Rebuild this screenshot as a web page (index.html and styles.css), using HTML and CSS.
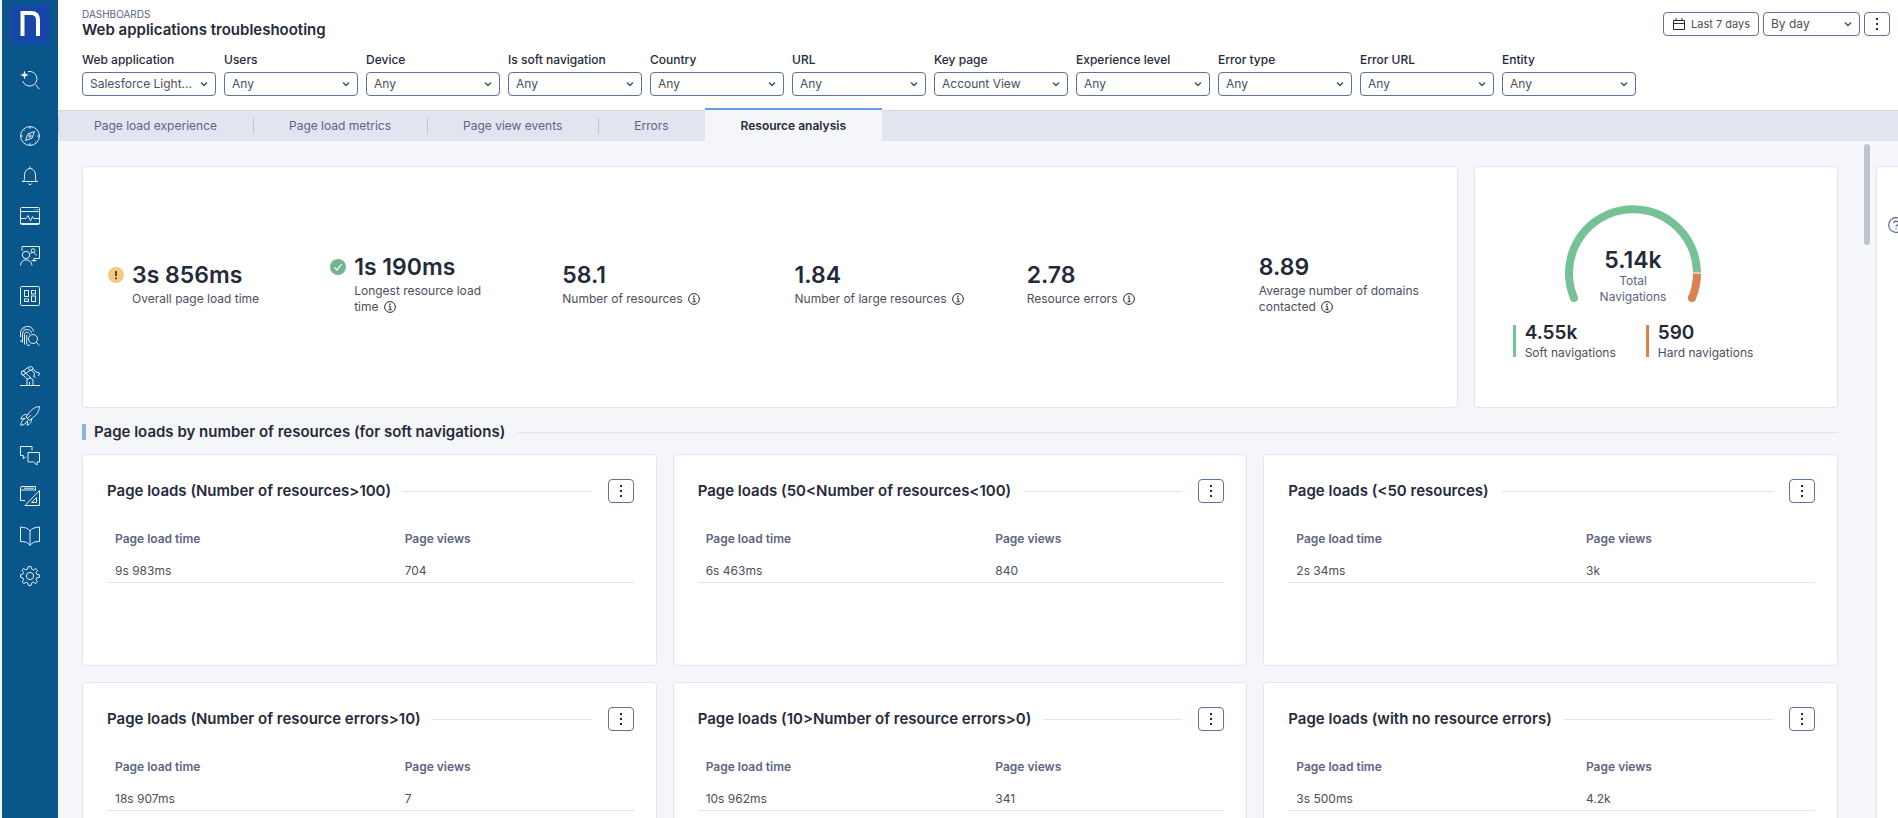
FILE: index.html
```html
<!DOCTYPE html>
<html lang="en">
<head>
<meta charset="utf-8">
<meta name="viewport" content="width=device-width, initial-scale=1">
<title>Web applications troubleshooting</title>
<link rel="stylesheet" href="styles.css">
</head>
<body>
<svg class="sprite" aria-hidden="true">
  <symbol id="chevron" viewBox="0 0 8 8"><path d="M1 2.5 4 5.5 7 2.5" fill="none" stroke="currentColor" stroke-width="1.4"/></symbol>
  <symbol id="kebab" viewBox="0 0 12 12"><path d="M5 0h2v2H5zM5 5h2v2H5zM5 10h2v2H5z" fill="currentColor"/></symbol>
  <symbol id="info" viewBox="0 0 12 12"><circle cx="6" cy="6" r="5.4" fill="none" stroke="currentColor"/><path d="M4.8 5h1.4v3.6M4.5 8.7h3.2" fill="none" stroke="currentColor"/><circle cx="6" cy="3.2" r=".8" fill="currentColor"/></symbol>
</svg>
<div class="app">
  <nav class="sidebar" aria-label="Main">
    <a class="logo" href="#" aria-label="Home"><svg viewBox="0 0 40 40"><path d="M12.5 32V9H21q7 0 7 7v16" fill="none" stroke="#fff" stroke-width="4"/></svg></a>
    <a class="nav-link nav-search" href="#" aria-label="Search"><svg viewBox="0 0 20 20"><path d="M8 1.6a7.3 7.3 0 1 1-5.2 9.6M15.4 14.6l4.1 4.6"/><path class="solid" d="M4.5.5 5.6 3.9 9 5 5.6 6.1 4.5 9.5 3.4 6.1 0 5l3.4-1.1z"/></svg></a>
    <a class="nav-link" href="#" aria-label="Discover"><svg viewBox="0 0 20 20"><circle cx="10" cy="10" r="9.4"/><path d="m14.5 5.5-2.4 6.6-6.6 2.4 2.4-6.6zM10 .5v2.2M10 17.3v2.2M.5 10h2.2M17.3 10h2.2M3.3 3.3l1.2 1.2M15.5 15.5l1.2 1.2"/><circle cx="10" cy="10" r="1.2"/></svg></a>
    <a class="nav-link" href="#" aria-label="Alerts"><svg viewBox="0 0 20 20"><path d="M2 15.5h16M3.5 15.5c1.2-1.5 1-4 1-6.500a5.500 6.500 0 0 1 11 0c0 2.500-.2 5 1 6.500M10 .5v2M8.300 17.500a1.800 1.800 0 0 0 3.400 0"/></svg></a>
    <a class="nav-link" href="#" aria-label="Monitoring"><svg viewBox="0 0 20 20"><rect x=".5" y="1.500" width="19" height="17" rx="1"/><path d="M.5 5.500h19M14.500 3.500h1M17 3.500h1M1 12.500h5l2-3 2.500 5.500 2-4.500 1 2h6M1 17.500h18"/></svg></a>
    <a class="nav-link" href="#" aria-label="Users"><svg viewBox="0 0 20 20"><path d="M2 5V.5h17.500v12H14M14 12v4M11.500 14.500h5"/><circle cx="6" cy="9" r="3.700"/><path d="M.5 19.500c.2-7.500 11-7.500 11.500 0M10.500 8l2-2.200"/><circle cx="13" cy="4.700" r="2"/><path d="m14 6.500 2.500 3"/></svg></a>
    <a class="nav-link" href="#" aria-label="Dashboards"><svg viewBox="0 0 20 20"><rect x=".5" y=".5" width="19" height="19" rx="1"/><rect x="4.500" y="4.500" width="4" height="6"/><rect x="11.500" y="4.500" width="4" height="3.500"/><rect x="4.500" y="13" width="4" height="2.500"/><rect x="11.500" y="10" width="4" height="5.500"/></svg></a>
    <a class="nav-link" href="#" aria-label="Investigations"><svg viewBox="0 0 20 20"><circle cx="13" cy="13" r="4.500"/><path d="m16.300 16.300 3.200 3.200M.5 11V7c0-8 12-9 13-1.500M2.500 16.500V8c0-5.500 8-6 9-1M1 14v2M4.500 18.500V8.500c0-3 4.500-3 5 0M6.700 18.500V9M3 3.500l2-2M7 19.500l3-.5"/></svg></a>
    <a class="nav-link" href="#" aria-label="Remote actions"><svg viewBox="0 0 20 20"><path d="M0 19.500h20M7 19v-5.500q3-3 6 0V19M9.500 16v3M2 8.500l6 5M5 6.500l6 5.500M2.500 5.500l6-4.500M5.500 7.500l6-4M13 2.500l3 3.500M11.500 4l3.500 4M16 6l3.500 1-1 3M14.500 8l-1 2.500 2 1"/><circle cx="3.200" cy="7" r="2"/><circle cx="10.700" cy="2.500" r="2"/></svg></a>
    <a class="nav-link" href="#" aria-label="Campaigns"><svg viewBox="0 0 20 20"><path d="M19.500.5c-6 .5-9 4-13.500 10.500l3.300 3.300C16 10 19 6.500 19.500.5ZM7.500 8.500C4 8 2 10 .8 13l4.700-.7M11.500 12.500c.5 3.500-1.500 5.500-4.300 6.800l.5-4.700M5 12.500C2 14 1 16.500.7 19.300c3-.3 5-1.500 6.800-4.500M7 12.800l4-4"/></svg></a>
    <a class="nav-link" href="#" aria-label="Engage"><svg viewBox="0 0 20 20"><path d="M12 4.500v-4H.5v9h2.800v3.500l2.500-2.500M8 6.500h11.500v9.500H17v3l-3.500-3H8z"/></svg></a>
    <a class="nav-link" href="#" aria-label="Design"><svg viewBox="0 0 20 20"><path d="M5 14.500H.5V2Q.5.500 2 .5h13.500v4M.5 4h15M4 2.200h10M19.500 4.500v15H5zM16.500 11.500v5h-5z"/></svg></a>
    <a class="nav-link" href="#" aria-label="Library"><svg viewBox="0 0 20 20"><path d="M10 19.500V5Q8 1.500.5 1v14.500Q8 15.500 10 19.500 12 15.500 19.500 15.500V1Q12 1.500 10 5"/></svg></a>
    <a class="nav-link" href="#" aria-label="Settings"><svg viewBox="0 0 20 20"><circle cx="10" cy="10" r="3.600"/><path d="m8.200.6-.6 2.500-1.800.8L3.500 2.500 2 4.300l1.500 2.200-.7 1.700-2.300.6v2.500l2.400.6.7 1.800-1.400 2.200 1.800 1.700 2.200-1.400 1.600.7.600 2.500h2.700l.6-2.500 1.700-.7 2.300 1.400 1.700-1.800-1.400-2.200.7-1.700 2.600-.6V8.800l-2.600-.6-.7-1.700 1.500-2.200-1.800-1.800-2.200 1.400-1.800-.8-.6-2.500z"/></svg></a>
  </nav>

  <main class="main">
    <header class="header">
      <div class="title-row">
        <div>
          <p class="eyebrow">DASHBOARDS</p>
          <h1 class="page-title">Web applications troubleshooting</h1>
        </div>
        <div class="actions">
          <button class="date-button" type="button"><svg viewBox="0 0 14 14"><path d="M1.500 3.500h11v9h-11zM1.500 6.500h11M4 1v2.500M10 1v2.500" fill="none" stroke="currentColor"/></svg>Last 7 days</button>
          <span class="select granularity"><select aria-label="Granularity"><option>By day</option></select><svg><use href="#chevron"/></svg></span>
          <button class="kebab" type="button" aria-label="More options"><svg><use href="#kebab"/></svg></button>
        </div>
      </div>
      <form class="filters">
        <label class="filter">Web application<span class="select"><select><option>Salesforce Light...</option></select><svg><use href="#chevron"/></svg></span></label>
        <label class="filter">Users<span class="select"><select><option>Any</option></select><svg><use href="#chevron"/></svg></span></label>
        <label class="filter">Device<span class="select"><select><option>Any</option></select><svg><use href="#chevron"/></svg></span></label>
        <label class="filter">Is soft navigation<span class="select"><select><option>Any</option></select><svg><use href="#chevron"/></svg></span></label>
        <label class="filter">Country<span class="select"><select><option>Any</option></select><svg><use href="#chevron"/></svg></span></label>
        <label class="filter">URL<span class="select"><select><option>Any</option></select><svg><use href="#chevron"/></svg></span></label>
        <label class="filter">Key page<span class="select"><select><option>Account View</option></select><svg><use href="#chevron"/></svg></span></label>
        <label class="filter">Experience level<span class="select"><select><option>Any</option></select><svg><use href="#chevron"/></svg></span></label>
        <label class="filter">Error type<span class="select"><select><option>Any</option></select><svg><use href="#chevron"/></svg></span></label>
        <label class="filter">Error URL<span class="select"><select><option>Any</option></select><svg><use href="#chevron"/></svg></span></label>
        <label class="filter">Entity<span class="select"><select><option>Any</option></select><svg><use href="#chevron"/></svg></span></label>
      </form>
    </header>

    <nav class="tabs" aria-label="Dashboard sections">
      <a class="tab" href="#">Page load experience</a>
      <a class="tab" href="#">Page load metrics</a>
      <a class="tab" href="#">Page view events</a>
      <a class="tab" href="#">Errors</a>
      <a class="tab active" href="#" aria-current="page">Resource analysis</a>
    </nav>

    <div class="body">
      <div class="dashboard">
        <div class="overview">
          <section class="card kpis">
            <div class="kpi"><svg class="status warn" viewBox="0 0 16 16"><circle cx="8" cy="8" r="8"/><path d="M8 4v5M8 10.500v1.700" fill="none" stroke="#252a3a" stroke-width="1.600"/></svg><div><p class="kpi-value">3s 856ms</p><p class="kpi-label">Overall page load time</p></div></div>
            <div class="kpi"><svg class="status ok" viewBox="0 0 16 16"><circle cx="8" cy="8" r="8"/><path d="m4.500 8.500 2.500 2.500 4.500-6" fill="none" stroke="#fff" stroke-width="1.200"/></svg><div><p class="kpi-value">1s 190ms</p><p class="kpi-label">Longest resource load <span class="nowrap">time <svg class="info"><use href="#info"/></svg></span></p></div></div>
            <div class="kpi"><div><p class="kpi-value">58.1</p><p class="kpi-label">Number of <span class="nowrap">resources <svg class="info"><use href="#info"/></svg></span></p></div></div>
            <div class="kpi"><div><p class="kpi-value">1.84</p><p class="kpi-label">Number of large <span class="nowrap">resources <svg class="info"><use href="#info"/></svg></span></p></div></div>
            <div class="kpi"><div><p class="kpi-value">2.78</p><p class="kpi-label">Resource <span class="nowrap">errors <svg class="info"><use href="#info"/></svg></span></p></div></div>
            <div class="kpi last"><div><p class="kpi-value">8.89</p><p class="kpi-label">Average number of domains <span class="nowrap">contacted <svg class="info"><use href="#info"/></svg></span></p></div></div>
          </section>
          <section class="card navigations">
            <div class="gauge">
              <svg viewBox="0 0 136 100" aria-hidden="true"><g fill="none" stroke-width="8"><path d="M9 93A64 64 0 1 1 132 67.500" stroke="#76c196"/><path d="M132 68.500A64 64 0 0 1 127 93" stroke="#dd8052"/></g><circle cx="9" cy="93" r="4" fill="#76c196"/><circle cx="127" cy="93" r="4" fill="#dd8052"/></svg>
              <div class="gauge-text"><p class="gauge-value">5.14k</p><p>Total<br>Navigations</p></div>
            </div>
            <div class="legend">
              <div class="legend-item soft"><p class="legend-value">4.55k</p><p>Soft navigations</p></div>
              <div class="legend-item hard"><p class="legend-value">590</p><p>Hard navigations</p></div>
            </div>
          </section>
        </div>

        <h2 class="section-title">Page loads by number of resources (for soft navigations)</h2>

        <div class="cards">
          <section class="card panel">
            <div class="panel-head"><h3>Page loads (Number of resources&gt;100)</h3><button class="kebab" type="button" aria-label="Panel options"><svg><use href="#kebab"/></svg></button></div>
            <table><thead><tr><th>Page load time</th><th>Page views</th></tr></thead><tbody><tr><td>9s 983ms</td><td>704</td></tr></tbody></table>
          </section>
          <section class="card panel">
            <div class="panel-head"><h3>Page loads (50&lt;Number of resources&lt;100)</h3><button class="kebab" type="button" aria-label="Panel options"><svg><use href="#kebab"/></svg></button></div>
            <table><thead><tr><th>Page load time</th><th>Page views</th></tr></thead><tbody><tr><td>6s 463ms</td><td>840</td></tr></tbody></table>
          </section>
          <section class="card panel">
            <div class="panel-head"><h3>Page loads (&lt;50 resources)</h3><button class="kebab" type="button" aria-label="Panel options"><svg><use href="#kebab"/></svg></button></div>
            <table><thead><tr><th>Page load time</th><th>Page views</th></tr></thead><tbody><tr><td>2s 34ms</td><td>3k</td></tr></tbody></table>
          </section>
          <section class="card panel">
            <div class="panel-head"><h3>Page loads (Number of resource errors&gt;10)</h3><button class="kebab" type="button" aria-label="Panel options"><svg><use href="#kebab"/></svg></button></div>
            <table><thead><tr><th>Page load time</th><th>Page views</th></tr></thead><tbody><tr><td>18s 907ms</td><td>7</td></tr></tbody></table>
          </section>
          <section class="card panel">
            <div class="panel-head"><h3>Page loads (10&gt;Number of resource errors&gt;0)</h3><button class="kebab" type="button" aria-label="Panel options"><svg><use href="#kebab"/></svg></button></div>
            <table><thead><tr><th>Page load time</th><th>Page views</th></tr></thead><tbody><tr><td>10s 962ms</td><td>341</td></tr></tbody></table>
          </section>
          <section class="card panel">
            <div class="panel-head"><h3>Page loads (with no resource errors)</h3><button class="kebab" type="button" aria-label="Panel options"><svg><use href="#kebab"/></svg></button></div>
            <table><thead><tr><th>Page load time</th><th>Page views</th></tr></thead><tbody><tr><td>3s 500ms</td><td>4.2k</td></tr></tbody></table>
          </section>
        </div>
      </div>
      <div class="scrollbar" aria-hidden="true"></div>
      <aside class="card drawer">
        <button class="help" type="button" aria-label="Help"><svg viewBox="0 0 14 14"><circle cx="7" cy="7" r="6.400"/><path d="M5 5.500c0-2.600 4.200-2.600 4.200 0C9.200 7 7 7 7 8.500M7 9.800v1.200"/></svg></button>
      </aside>
    </div>
  </main>
</div>
</body>
</html>
```
FILE: styles.css
```css
:root {
  --ink: #252a3a;
  --text: #4b4f5d;
  --muted: #5d6484;
  --line: #e2e5f0;
  --control: #5d739a;
  --canvas: #f5f6fa;
  --green: #76c196;
  --orange: #dd8052;
}

* { box-sizing: border-box; }

body {
  margin: 0;
  background: #fff;
  color: var(--text);
  font-family: Inter, "Liberation Sans", sans-serif;
  font-size: 12px;
  line-height: 16px;
}

h1, h2, h3, p { margin: 0; }
button, select { font: inherit; color: inherit; }
.sprite { display: none; }
.nowrap { white-space: nowrap; }

.app {
  display: flex;
  height: 100vh;
  overflow: hidden;
}

/* Sidebar */
.sidebar {
  flex: none;
  display: flex;
  flex-direction: column;
  align-items: center;
  gap: 20px;
  width: 58px;
  padding-top: 4px;
  border-left: 2px solid #f3f5f8;
  background: #08568a;
}
.logo { width: 40px; height: 40px; background: #1546a8; }
.logo svg { display: block; }
.nav-link { width: 20px; height: 20px; }
.nav-link svg {
  display: block;
  fill: none;
  stroke: #e4eef5;
  overflow: visible;
}
.nav-link .solid { fill: #fff; stroke: none; }
.nav-search { margin: 6px 0 16px; }

/* Header */
.main {
  flex: 1;
  min-width: 0;
  display: flex;
  flex-direction: column;
}
.header { padding: 8px 8px 14px 24px; }
.title-row { display: flex; justify-content: space-between; }
.eyebrow { font-size: 10px; line-height: 12px; color: var(--muted); }
.page-title {
  font-size: 15px;
  line-height: 20px;
  font-weight: 600;
  color: var(--ink);
}
.actions {
  display: flex;
  align-items: flex-start;
  gap: 4px;
  padding-top: 4px;
}
.date-button, .kebab {
  display: flex;
  align-items: center;
  justify-content: center;
  height: 24px;
  padding: 0;
  border: 1px solid var(--control);
  border-radius: 4px;
  background: #fff;
}
.date-button { gap: 5px; padding: 0 8px; font-size: 11px; }
.date-button svg { width: 14px; height: 14px; color: var(--ink); }
.kebab { flex: none; width: 26px; color: var(--ink); }
.kebab svg { width: 12px; height: 12px; }

.select { display: grid; align-items: center; }
.select > * { grid-area: 1 / 1; }
.select select {
  appearance: none;
  width: 100%;
  height: 24px;
  padding: 0 20px 0 7px;
  border: 1px solid var(--control);
  border-radius: 4px;
  background: #fff;
  color: var(--text);
}
.select svg {
  justify-self: end;
  width: 8px;
  height: 8px;
  margin-right: 8px;
  color: #454b60;
  pointer-events: none;
}
.granularity { width: 97px; }

.filters { display: flex; gap: 8px; margin-top: 12px; }
.filter {
  display: grid;
  gap: 4px;
  width: 134px;
  font-weight: 500;
  color: var(--ink);
}
.filter select { font-weight: 400; }

/* Tabs */
.tabs {
  display: flex;
  height: 31px;
  border-top: 1px solid #d5d9e6;
  background: var(--line);
}
.tab {
  display: flex;
  align-items: center;
  padding: 0 36px;
  color: var(--muted);
  text-decoration: none;
  background: linear-gradient(#bfc4d2, #bfc4d2) left center / 1px 16px no-repeat;
}
.tab.active {
  height: 33px;
  margin-top: -3px;
  border-top: 2px solid #5ea1e6;
  background: var(--canvas);
  color: var(--ink);
  font-weight: 600;
}

/* Dashboard */
.body {
  flex: 1;
  min-height: 0;
  display: flex;
  overflow: hidden;
  background: var(--canvas);
}
.dashboard {
  flex: 1;
  min-width: 0;
  padding: 25px 26px 0 24px;
}
.card {
  border: 1px solid var(--line);
  border-radius: 4px;
  background: #fff;
}
.overview {
  display: grid;
  grid-template-columns: 1376fr 364fr;
  gap: 16px;
}
.kpis {
  display: grid;
  grid-template-columns: 222fr repeat(4, 232fr) 174fr;
  align-items: center;
  padding: 0 24px 8px 25px;
}
.kpi {
  display: flex;
  gap: 8px;
  padding-right: 48px;
}
.kpi.last { padding-right: 0; }
.status { flex: none; width: 16px; height: 16px; margin-top: 8px; }
.warn { fill: #f9c77f; }
.ok { fill: #73b690; }
.kpi-value, .gauge-value {
  font-size: 23px;
  line-height: 32px;
  font-weight: 600;
  color: var(--ink);
}
.gauge-value { line-height: 26px; }
.info {
  width: 12px;
  height: 12px;
  margin-left: 2px;
  vertical-align: -2px;
  color: var(--ink);
}

.navigations {
  display: flex;
  flex-direction: column;
  align-items: center;
  padding: 38px 46px 50px 0;
}
.gauge { display: grid; justify-items: center; color: var(--muted); text-align: center; }
.gauge > * { grid-area: 1 / 1; }
.gauge svg { width: 136px; height: 100px; }
.gauge-text { padding-top: 42px; }
.legend { display: flex; gap: 30px; margin-top: 20px; }
.legend-item {
  height: 32px;
  padding-left: 9px;
  border-left: 3px solid;
}
.legend-item p { color: var(--text); }
.legend-item .legend-value {
  margin-bottom: 4px;
  font-size: 19px;
  font-weight: 600;
  color: var(--ink);
}
.soft { border-color: var(--green); }
.hard { border-color: var(--orange); }

.section-title {
  display: flex;
  align-items: center;
  gap: 12px;
  margin: 16px 0 14px;
  padding-left: 8px;
  border-left: 4px solid #8ab4e2;
  font-size: 15px;
  line-height: 16px;
  font-weight: 600;
  color: var(--ink);
}
.section-title::after, .panel-head h3::after {
  content: "";
  flex: 1;
  height: 1px;
  background: var(--line);
}

.cards {
  display: grid;
  grid-template-columns: repeat(3, 1fr);
  gap: 16px;
}
.panel { min-height: 212px; padding: 24px 22px 24px 24px; }
.panel-head { display: flex; align-items: center; gap: 16px; }
.panel-head h3 {
  flex: 1;
  display: flex;
  align-items: center;
  gap: 12px;
  font-size: 15px;
  line-height: 24px;
  font-weight: 600;
  color: var(--ink);
}
table {
  width: 100%;
  margin-top: 20px;
  border-collapse: collapse;
  table-layout: fixed;
  text-align: left;
}
th, td { height: 32px; padding: 0 8px; }
th { width: 45%; font-weight: 600; color: var(--muted); }
th:first-child { width: 55%; }
td { height: 27px; padding-top: 5px; border-bottom: 1px solid var(--line); }

.scrollbar {
  flex: none;
  width: 6px;
  height: 101px;
  margin-top: 3px;
  border-radius: 3px;
  background: #bec3cf;
}
.drawer {
  flex: none;
  width: 22px;
  margin: 25px 0 0 6px;
  padding: 50px 0 0 11px;
  border-width: 1px 0 0 1px;
  border-radius: 4px 0 0;
  overflow: hidden;
}
.help { display: block; width: 16px; height: 16px; padding: 0; border: 0; background: none; }
.help svg { display: block; width: 16px; height: 16px; fill: none; stroke: var(--muted); }
```
